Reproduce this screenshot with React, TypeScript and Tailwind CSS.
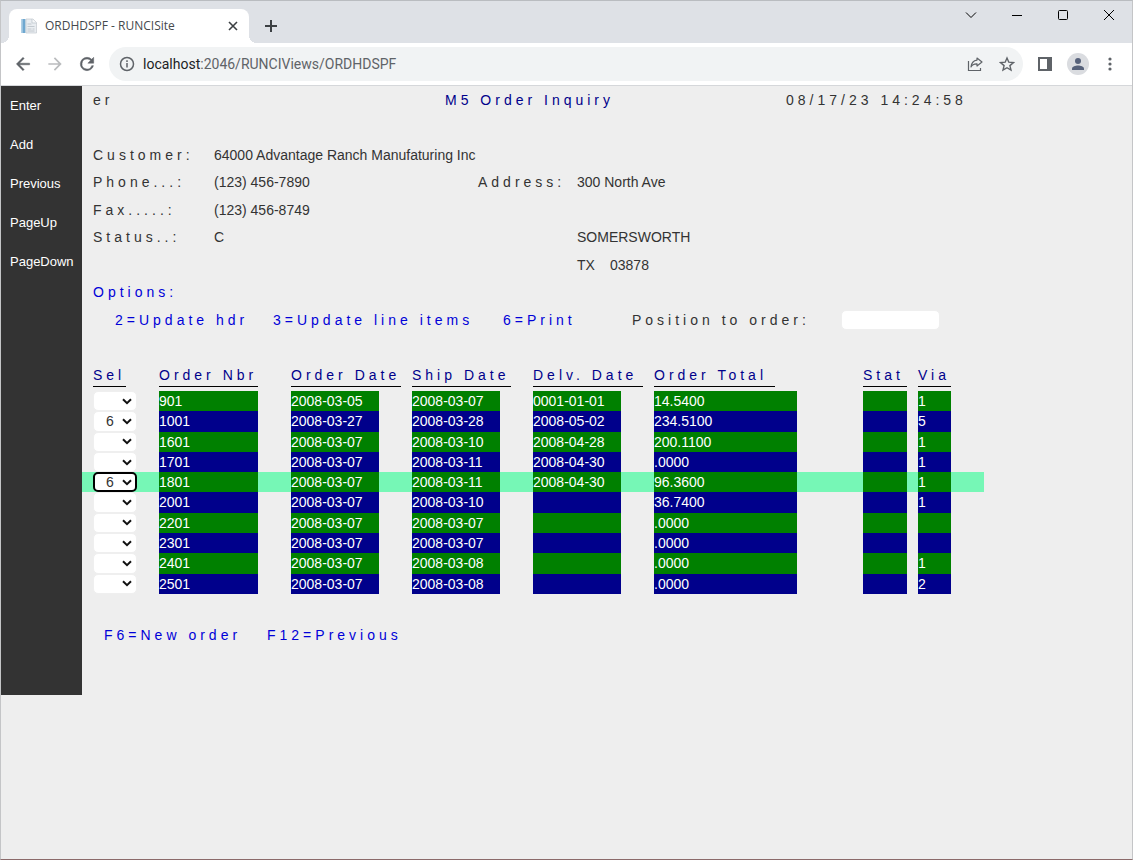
import { useState } from "react";
import type { ReactNode } from "react";

type Order = {
  sel: string;
  nbr: string;
  ordered: string;
  shipped: string;
  delivered: string;
  total: string;
  stat: string;
  via: string;
};

const orders: Order[] = [
  { sel: "", nbr: "901", ordered: "2008-03-05", shipped: "2008-03-07", delivered: "0001-01-01", total: "14.5400", stat: "", via: "1" },
  { sel: "6", nbr: "1001", ordered: "2008-03-27", shipped: "2008-03-28", delivered: "2008-05-02", total: "234.5100", stat: "", via: "5" },
  { sel: "", nbr: "1601", ordered: "2008-03-07", shipped: "2008-03-10", delivered: "2008-04-28", total: "200.1100", stat: "", via: "1" },
  { sel: "", nbr: "1701", ordered: "2008-03-07", shipped: "2008-03-11", delivered: "2008-04-30", total: ".0000", stat: "", via: "1" },
  { sel: "6", nbr: "1801", ordered: "2008-03-07", shipped: "2008-03-11", delivered: "2008-04-30", total: "96.3600", stat: "", via: "1" },
  { sel: "", nbr: "2001", ordered: "2008-03-07", shipped: "2008-03-10", delivered: "", total: "36.7400", stat: "", via: "1" },
  { sel: "", nbr: "2201", ordered: "2008-03-07", shipped: "2008-03-07", delivered: "", total: ".0000", stat: "", via: "" },
  { sel: "", nbr: "2301", ordered: "2008-03-07", shipped: "2008-03-07", delivered: "", total: ".0000", stat: "", via: "" },
  { sel: "", nbr: "2401", ordered: "2008-03-07", shipped: "2008-03-08", delivered: "", total: ".0000", stat: "", via: "1" },
  { sel: "", nbr: "2501", ordered: "2008-03-07", shipped: "2008-03-08", delivered: "", total: ".0000", stat: "", via: "2" },
];

const commands = ["Enter", "Add", "Previous", "PageUp", "PageDown"];

// Column widths of the order list, in steps of the 11px character cell.
const listColumns = "grid grid-cols-[66px_132px_121px_121px_121px_209px_55px_66px] pl-[11px]";

const headings = [
  { title: "Sel", width: "w-[33px]" },
  { title: "Order Nbr", width: "w-[99px]" },
  { title: "Order Date", width: "w-[110px]" },
  { title: "Ship Date", width: "w-[99px]" },
  { title: "Delv. Date", width: "w-[110px]" },
  { title: "Order Total", width: "w-[121px]" },
  { title: "Stat", width: "w-[44px]" },
  { title: "Via", width: "w-[33px]" },
];

function TabStrip() {
  return (
    <header className="flex h-[42px] items-end bg-[#dee1e6] pl-2">
      <div className="relative flex h-[34px] w-[240px] items-center rounded-t-lg bg-white pr-2 pl-3">
        <span className="absolute bottom-0 -left-2 size-2 bg-[radial-gradient(circle_at_0_0,transparent_8px,white_8px)]" />
        <span className="absolute -right-2 bottom-0 size-2 bg-[radial-gradient(circle_at_100%_0,transparent_8px,white_8px)]" />
        <svg className="size-4" viewBox="0 0 16 16" aria-hidden="true">
          <path d="M.5 1h4v14h-4z" fill="#6fa8d0" />
          <path d="M.5 1h1.3v14H.5z" fill="#a9cbe3" />
          <path d="M5 1h7l3.5 3.5V15H5z" fill="#e9edf1" stroke="#c3c9cf" strokeWidth=".7" />
          <path d="M11 1v4h4.5" fill="#f8f9fa" stroke="#b9c1c8" strokeWidth=".7" />
          <path d="M6.5 6h4M6.5 8.5h7M6.5 11h4M11.5 11h2M6.5 13h7" stroke="#b7bfc7" strokeWidth=".8" />
        </svg>
        <span className="ml-2 flex-1 text-xs text-[#45494d]">ORDHDSPF - RUNCISite</span>
        <button aria-label="Close tab" className="flex size-4 items-center justify-center text-[#3c4043]">
          <svg className="size-[10px]" viewBox="0 0 10 10" stroke="currentColor" strokeWidth="1.6">
            <path d="M1 1l8 8M9 1L1 9" />
          </svg>
        </button>
      </div>
      <button aria-label="New tab" className="mb-[7px] ml-3 flex size-5 items-center justify-center text-[#3c4043]">
        <svg className="size-3" viewBox="0 0 12 12" stroke="currentColor" strokeWidth="2">
          <path d="M6 0v12M0 6h12" />
        </svg>
      </button>
      <div className="ml-auto flex h-7 self-start text-black">
        <WindowButton label="Search tabs">
          <path d="M1 3.5l5 5 5-5" />
        </WindowButton>
        <WindowButton label="Minimize">
          <path d="M1 6.5h10" shapeRendering="crispEdges" />
        </WindowButton>
        <WindowButton label="Maximize">
          <rect x="1.5" y="1.5" width="9" height="9" rx="1" />
        </WindowButton>
        <WindowButton label="Close">
          <path d="M1 1l10 10M11 1L1 11" />
        </WindowButton>
      </div>
    </header>
  );
}

function WindowButton({ label, children }: { label: string; children: ReactNode }) {
  return (
    <button aria-label={label} className="flex w-[46px] items-center justify-center">
      <svg className="size-3" viewBox="0 0 12 12" fill="none" stroke="currentColor">
        {children}
      </svg>
    </button>
  );
}

function Toolbar() {
  return (
    <div className="flex h-[43px] items-center border-b border-[#d5d7da] bg-white pr-3 pl-3 text-[#5f6368]">
      <button aria-label="Back" className="w-8">
        <svg className="size-5" viewBox="0 0 24 24" fill="currentColor">
          <path d="M20 11H7.83l5.59-5.59L12 4l-8 8 8 8 1.41-1.41L7.83 13H20v-2z" stroke="currentColor" strokeWidth=".5" />
        </svg>
      </button>
      <button aria-label="Forward" className="w-8 text-[#babcbe]">
        <svg className="size-5" viewBox="0 0 24 24" fill="currentColor">
          <path d="M12 4l-1.41 1.41L16.17 11H4v2h12.17l-5.58 5.59L12 20l8-8z" />
        </svg>
      </button>
      <button aria-label="Reload" className="w-8">
        <svg className="size-5" viewBox="0 0 24 24" fill="currentColor">
          <path d="M17.65 6.35A7.96 7.96 0 0 0 12 4a8 8 0 1 0 7.73 10h-2.08A6 6 0 1 1 12 6c1.66 0 3.14.69 4.22 1.78L13 11h7V4z" stroke="currentColor" strokeWidth=".6" />
        </svg>
      </button>
      <div className="flex h-[34px] flex-1 items-center rounded-full bg-[#f1f3f4] pl-[10px]">
        <svg className="size-4" viewBox="0 0 16 16" fill="none" stroke="currentColor" strokeWidth="1.5" aria-hidden="true">
          <circle cx="8" cy="8" r="6.5" />
          <path d="M8 7v4.5M8 4.3v1.6" />
        </svg>
        <div role="textbox" aria-label="Address bar" tabIndex={0} className="ml-2 flex-1 font-[Roboto,sans-serif] text-sm">
          <span className="text-[#202124]">localhost</span>:2046/RUNCIViews/ORDHDSPF
        </div>
        <button aria-label="Share this page" className="flex w-8 justify-center">
          <svg className="size-4" viewBox="0 0 16 16" fill="none" stroke="currentColor" strokeWidth="1.2">
            <path d="M1.5 5v9.5h12V12" />
            <path d="M10 2l5 4-5 4V7.8C7 7.7 5 8.700 4 11c.4-4 2.600-6.500 6-6.900z" strokeLinejoin="round" />
          </svg>
        </button>
        <button aria-label="Bookmark this tab" className="flex w-8 justify-center">
          <svg className="size-4" viewBox="0 0 16 16" fill="none" stroke="currentColor" strokeWidth="1.4">
            <path d="M8 2l1.800 4.200 4.600.4-3.500 3 1.100 4.500L8 11.700l-4 2.400 1.100-4.500-3.500-3 4.600-.4z" />
          </svg>
        </button>
      </div>
      <button aria-label="Side panel" className="mx-1 flex w-9 justify-center">
        <svg className="size-[14px]" viewBox="0 0 14 14">
          <path d="M0 0h14v14H0z" fill="currentColor" />
          <path d="M2 2h7v10H2z" fill="#fff" />
        </svg>
      </button>
      <button aria-label="Profile" className="flex size-[22px] items-center justify-center rounded-full bg-[#dadce0] text-[#56617a]">
        <svg className="size-[14px]" viewBox="0 0 14 14" fill="currentColor">
          <circle cx="7" cy="4" r="3" />
          <path d="M1 13v-1.500C1 9.500 4.500 8.500 7 8.500s6 1 6 3V13z" />
        </svg>
      </button>
      <button aria-label="Browser menu" className="ml-[11px] flex w-5 justify-center">
        <svg className="h-[14px] w-1" viewBox="0 0 4 14" fill="currentColor">
          <circle cx="2" cy="2" r="1.600" />
          <circle cx="2" cy="7" r="1.600" />
          <circle cx="2" cy="12" r="1.600" />
        </svg>
      </button>
    </div>
  );
}

function OrderRow({ order, striped, current, onFocus }: { order: Order; striped: boolean; current: boolean; onFocus: () => void }) {
  const fill = striped ? "bg-[#00008b]" : "bg-[#008000]";
  return (
    <tr className={`${listColumns} ${current ? "bg-[#76f7b6]" : ""}`}>
      <td className="relative w-11">
        <select
          aria-label={`Select order ${order.nbr}`}
          defaultValue={order.sel}
          onFocus={onFocus}
          className={`block h-full w-full appearance-none rounded-[5px] bg-white leading-4 text-[#333] ${current ? "border-2 border-black pl-[11px]" : "border border-[#efefef] pl-3"}`}
        >
          <option value=""></option>
          <option value="2">2</option>
          <option value="3">3</option>
          <option value="6">6</option>
        </select>
        <svg
          className="pointer-events-none absolute inset-y-0 right-[5px] my-auto h-[7px] w-[10px]"
          viewBox="0 0 10 7"
          fill="none"
          stroke="#111"
          strokeWidth="2"
          aria-hidden="true"
        >
          <path d="M1 1.200l4 4 4-4" />
        </svg>
      </td>
      <td className={`w-[99px] ${fill}`}>{order.nbr}</td>
      <td className={`w-[88px] ${fill}`}>{order.ordered}</td>
      <td className={`w-[88px] ${fill}`}>{order.shipped}</td>
      <td className={`w-[88px] ${fill}`}>{order.delivered}</td>
      <td className={`w-[143px] ${fill}`}>{order.total}</td>
      <td className={`w-[44px] ${fill}`}>{order.stat}</td>
      <td className={`w-[33px] ${fill}`}>{order.via}</td>
    </tr>
  );
}

export default function App() {
  const [current, setCurrent] = useState("1801");

  return (
    <div className="flex min-h-screen flex-col border border-t-[#b9bcc0] border-r-[#c4c5c7] border-b-[#8b6a6a] border-l-[#c4c5c7] bg-[#eeeeee] font-['Liberation_Sans',Arial,sans-serif] text-sm text-[#333]">
      <div className="font-['Open_Sans','Noto_Sans',sans-serif]">
        <TabStrip />
        <Toolbar />
      </div>
      <div className="flex items-start">
        <nav className="flex h-[609px] w-[81px] shrink-0 flex-col bg-[#333]">
          {commands.map((command) => (
            <button key={command} className="h-[39px] pt-[2px] pl-[9px] text-left text-[13px] text-white">
              {command}
            </button>
          ))}
        </nav>

        <main className="w-[902px]">
          <section className="grid h-[275px] grid-cols-[repeat(82,11px)] grid-rows-10 items-center whitespace-nowrap">
            <span className="col-start-2 row-start-1 tracking-[4px]">er</span>
            <h1 className="col-start-[34] row-start-1 tracking-[4px] text-[#00008b]">M5 Order Inquiry</h1>
            <time className="col-start-[65] row-start-1 tracking-[4px]">08/17/23 14:24:58</time>

            <span className="col-start-2 row-start-3 tracking-[4px]">Customer:</span>
            <span className="col-start-[13] row-start-3">64000 Advantage Ranch Manufaturing Inc</span>

            <span className="col-start-2 row-start-4 tracking-[4px]">Phone...:</span>
            <span className="col-start-[13] row-start-4">(123) 456-7890</span>
            <span className="col-start-[37] row-start-4 tracking-[4px]">Address:</span>
            <span className="col-start-[46] row-start-4">300 North Ave</span>

            <span className="col-start-2 row-start-5 tracking-[4px]">Fax.....:</span>
            <span className="col-start-[13] row-start-5">(123) 456-8749</span>

            <span className="col-start-2 row-start-6 tracking-[4px]">Status..:</span>
            <span className="col-start-[13] row-start-6">C</span>
            <span className="col-start-[46] row-start-6">SOMERSWORTH</span>

            <span className="col-start-[46] row-start-7">TX</span>
            <span className="col-start-[49] row-start-7">03878</span>

            <span className="col-start-2 row-start-8 tracking-[4px] text-[#0000d8]">Options:</span>

            <div className="col-start-4 row-start-9 grid grid-cols-[158px_230px_auto] tracking-[4px] text-[#0000d8]">
              <span>2=Update hdr</span>
              <span>3=Update line items</span>
              <span>6=Print</span>
            </div>
            <label htmlFor="position" className="col-start-[51] row-start-9 tracking-[4px]">
              Position to order:
            </label>
            <input
              id="position"
              type="text"
              className="col-span-9 col-start-[70] row-start-9 h-5 w-full rounded-[5px] border border-[#efefef] bg-white px-1"
            />
          </section>

          <table className="block">
            <thead className="block h-[30px]">
              <tr className={listColumns}>
                {headings.map((heading) => (
                  <th
                    key={heading.title}
                    scope="col"
                    className={`h-[26px] border-b border-black pt-1 text-left font-normal tracking-[4px] whitespace-nowrap text-[#00008b] ${heading.width}`}
                  >
                    {heading.title}
                  </th>
                ))}
              </tr>
            </thead>
            <tbody className="grid h-[203px] grid-rows-10 leading-5 text-white">
              {orders.map((order, index) => (
                <OrderRow
                  key={order.nbr}
                  order={order}
                  striped={index % 2 === 1}
                  current={order.nbr === current}
                  onFocus={() => setCurrent(order.nbr)}
                />
              ))}
            </tbody>
          </table>

          <footer className="mt-[27px] grid h-7 grid-cols-[163px_auto] items-center pl-[22px] tracking-[4px] text-[#0000d8]">
            <span>F6=New order</span>
            <span>F12=Previous</span>
          </footer>
        </main>
      </div>
    </div>
  );
}
